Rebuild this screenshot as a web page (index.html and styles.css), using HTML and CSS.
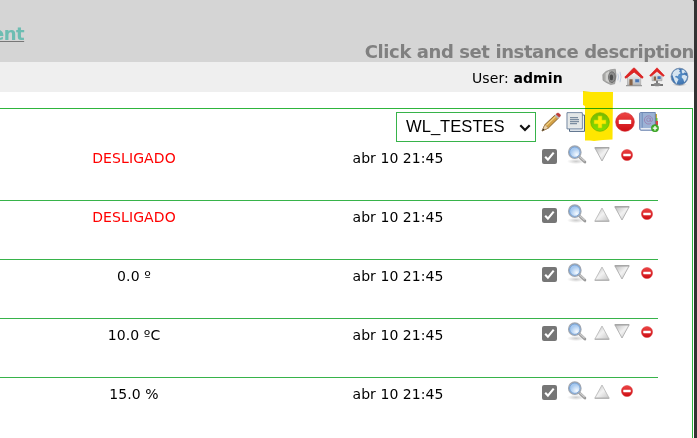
FILE: index.html
```
<!DOCTYPE html>
<html lang="pt">
<head>
<meta charset="utf-8">
<title>Instances</title>
<link rel="stylesheet" href="styles.css">
</head>
<body>
<svg class="sprite" aria-hidden="true">
  <defs>
    <linearGradient id="red" x2="0" y2="1"><stop stop-color="#ed4545"/><stop offset="1" stop-color="#cd0d13"/></linearGradient>
    <linearGradient id="green" x2="0" y2="1"><stop stop-color="#78b900"/><stop offset="1" stop-color="#83e000"/></linearGradient>
    <linearGradient id="tri" x2="1" y2="1"><stop stop-color="#bbb"/><stop offset=".5" stop-color="#f2f2f2"/><stop offset="1" stop-color="#c5c5c5"/></linearGradient>
    <linearGradient id="wall" x2="0" y2="1"><stop stop-color="#fff"/><stop offset="1" stop-color="#bbb"/></linearGradient>
    <radialGradient id="globe-fill"><stop stop-color="#5892cc"/><stop offset="1" stop-color="#3e71ad"/></radialGradient>
    <radialGradient id="lens" cx=".65" cy=".7"><stop stop-color="#f5faff"/><stop offset="1" stop-color="#a7c9ef"/></radialGradient>
    <radialGradient id="shade"><stop stop-color="#aaa"/><stop offset="1" stop-color="#aaa" stop-opacity="0"/></radialGradient>
  </defs>
  <symbol id="minus" viewBox="0 0 20 20"><circle cx="10" cy="10" r="9.3" fill="url(#red)" stroke="#d52a2e" stroke-width=".7"/><rect x="3.8" y="7.8" width="12.4" height="4.2" rx=".6" fill="#fff"/></symbol>
  <symbol id="plus" viewBox="0 0 20 20"><circle cx="10" cy="10" r="9.3" fill="url(#green)" stroke="#74ad00" stroke-width=".7"/><path d="M8 4h4v4h4v4h-4v4H8v-4H4V8h4z" fill="#ffea00" stroke="#b5d400" stroke-width=".6"/></symbol>
  <symbol id="pencil" viewBox="0 0 20 20"><path d="M1 19 4 12.5 14 3l3.4 3.2L7.4 16z" fill="#d2a045" stroke="#755222" stroke-width=".8"/><path d="M5 13.6 14.8 4.4" stroke="#f4d588" stroke-width="1.1"/><path d="M1 19 4 12.5 7.4 16z" fill="#ead2ab" stroke="#9a713b" stroke-width=".5"/><path d="m1 19 1.2-2.6 1.4 1.3z" fill="#333"/><path d="m13.4 3.6 1.5-1.4 3.4 3.1-1.5 1.5z" fill="#b7b7b7"/><path d="m14.9 2.2 1.3-1q1.3-.4 2.5.8t.8 2.1l-1.3 1.2z" fill="#c43a35" stroke="#933" stroke-width=".4"/></symbol>
  <symbol id="pages" viewBox="0 0 20 20"><path d="M3.5 3h15v16.4h-15z" fill="#eef2f5" stroke="#536984"/><path d="M1 .7h15.3v16.2H1z" fill="#f2f3f2" stroke="#6c829c"/><path d="M2.2 1.9h12.9v13.8H2.2z" fill="#e3e7e7"/><path d="M4 5.6h8M4 7.6h9M4 9.6h9M4 11.6h7" stroke="#7b8da0" stroke-width="1.1"/></symbol>
  <symbol id="book" viewBox="0 0 20 20"><path d="M16 2h2v4h-2z" fill="#c6a839"/><path d="M16 6h2.5v3H16z" fill="#6ab83d"/><path d="M16 9h3v4h-3z" fill="#d84242"/><path d="M1.5.5h14.8v17.8H2q-1.4-.2-1.4-1.6V1.6Q.6.7 1.5.5z" fill="#9cb2d5" stroke="#5874a3" stroke-width=".8"/><path d="M3.2 1v14.7" stroke="#6f8dbc"/><path d="M1.7 16h14v1.6h-14z" fill="#e8ecf2"/><circle cx="9.5" cy="7.7" r="1.8" fill="none" stroke="#9b86b5"/><path d="M11.4 5.8v3.4q1.8 1.2 2.2-1.5A4.1 4.1 0 1 0 12 11.2" fill="none" stroke="#9b86b5"/><circle cx="16" cy="16.2" r="3.7" fill="#43ae28" stroke="#278c1b" stroke-width=".4"/><path d="M16 14v4.4m-2.2-2.2h4.4" stroke="#fff" stroke-width="1.3"/></symbol>
  <symbol id="lens-icon" viewBox="0 0 20 20"><ellipse cx="9" cy="16.4" rx="9" ry="2.7" fill="url(#shade)" opacity=".6"/><path d="m12.2 11.7 5.7 5.3" stroke="#999" stroke-width="2.8" stroke-linecap="round"/><path d="m12.7 11.7 5 4.6" stroke="#ccc" stroke-width="1.2"/><circle cx="7.8" cy="7.2" r="6.2" fill="url(#lens)" stroke="#a3a8b0" stroke-width="1.3"/><circle cx="7.8" cy="7.2" r="5.2" fill="none" stroke="#6998d1" stroke-width=".8"/></symbol>
  <symbol id="up" viewBox="0 0 16 15"><path d="M8 1 15.2 14.2H.8z" fill="url(#tri)" stroke="#b5b5b5" stroke-width=".8"/><path d="M.8 14.2h14.4" stroke="#aaa"/></symbol>
  <symbol id="down" viewBox="0 0 16 15"><path d="M8 14 .8.8h14.4z" fill="url(#tri)" stroke="#a5a5a5" stroke-width=".8"/><path d="M.8.8h14.4" stroke="#999"/></symbol>
  <symbol id="check" viewBox="0 0 15 15"><rect width="15" height="15" rx="2" fill="#767676"/><path d="m3.2 7.8 2.7 2.8 5.8-7" fill="none" stroke="#fff" stroke-width="2.1"/></symbol>
  <symbol id="speaker" viewBox="0 0 20 18"><path d="M.8 6.5 4 3.4 8.5 1.8l4.8-.6q2 7-.7 14.6l-4 .8-4.4-2.2L1 12.3z" fill="#aaaaa8" stroke="#858585" stroke-width=".6"/><path d="M3.6 5.5 7 3v11.5l-3.4-2z" fill="#d0d0ce"/><ellipse cx="9.9" cy="9.2" rx="3.4" ry="5.4" fill="#8c8c8c" stroke="#666" stroke-width=".8"/><ellipse cx="9.4" cy="9.4" rx="1.7" ry="2.9" fill="#4c4c4c"/><path d="M15.8 5.6q1.3 3.4 0 6.8M18 3.8q2 5.2 0 10.4" fill="none" stroke="#bccade" stroke-width=".9"/></symbol>
  <symbol id="house" viewBox="0 0 20 20"><path d="M3.5 9.5 10 3l6.7 6.5V18H3.5z" fill="url(#wall)" stroke="#999" stroke-width=".5"/><path d="M2 18h16v1.2H2z" fill="#999"/><path d="M5.4 12.2h3.2v6H5.4z" fill="#886448"/><path d="M11 12h4.4v3.6H11z" fill="#4975b3" stroke="#bccce1" stroke-width=".5"/><path d="M.8 10.2 9.4 1.2q.6-.6 1.2 0l8.6 9q-.9 1.7-2.2.3L10.1 5 3 10.5q-1.4 1.4-2.2-.3z" fill="#e02424" stroke="#d52525" stroke-width=".9"/></symbol>
  <symbol id="house-net" viewBox="0 0 16 20"><path d="M7 13h2v4H7zM2 17h12v2H2z" fill="#777"/><ellipse cx="8" cy="17.5" rx="3.5" ry="1.8" fill="#888"/><path d="M3 7.4 8 2.6l5 4.8v6.3H3z" fill="url(#wall)" stroke="#999" stroke-width=".5"/><path d="M4.8 9.4h2.2v4H4.8z" fill="#886448"/><path d="M8.5 9.2h3.2V12H8.5z" fill="#4975b3"/><path d="M.7 8.5 8 .8l7.3 7.7q-.9 1.2-1.9.3L8 4.4 2.6 8.8q-1 .9-1.9-.3z" fill="#df2525" stroke="#df2525" stroke-width=".7"/></symbol>
  <symbol id="globe" viewBox="0 0 20 20"><ellipse cx="10" cy="18" rx="8" ry="1.8" fill="url(#shade)"/><circle cx="10" cy="9.6" r="8.9" fill="url(#globe-fill)" stroke="#7089a8" stroke-width=".8"/><path d="M2.3 7.3Q4 2.5 8.5 1.6l2 1.2-.9 1.7 1.8 1.2-2.4 1.6-.6 2-2-.5-1.3 1.1 2.2 1 1.7 1.6-1.2 2.3-.8 2.6-2-3-1.2-3.1zM12.2 2l2.6 1 2.2 2.7-1.9-.4-1.4 1.3-1.2-1.4zM12.4 8.5l2.8-1 2.9 1.8-.8 3.2-2.3 2.9-1.1-3.2-1.5-1.4z" fill="#d5e4f0"/></symbol>
</svg>

<div class="page">
  <header class="banner">
    <a class="brand">ent</a>
    <div class="description">Click and set instance description</div>
  </header>
  <nav class="userbar">
    <span class="user">User: <b>admin</b></span>
    <svg class="i-speaker"><use href="#speaker"/></svg>
    <svg class="i-house"><use href="#house"/></svg>
    <svg class="i-net"><use href="#house-net"/></svg>
    <svg class="i-globe"><use href="#globe"/></svg>
  </nav>
  <main class="panel">
    <div class="toolbar">
      <div class="select"><span>WL_TESTES</span><svg class="chevron" viewBox="0 0 12 8"><path d="m1.3 1.3 4.7 4.7 4.7-4.7" fill="none" stroke="#111" stroke-width="2.2"/></svg></div>
      <svg class="tool"><use href="#pencil"/></svg>
      <svg class="tool"><use href="#pages"/></svg>
      <span class="marked"><svg class="marker" viewBox="0 0 30 50"><path d="M0 0 8 1 30 1 29.5 48.5 20 49 11 50 7 49.5 2 49.5V15L0 14z" fill="#ffe600"/></svg><svg class="tool"><use href="#plus"/></svg></span>
      <svg class="tool"><use href="#minus"/></svg>
      <svg class="tool"><use href="#book"/></svg>
    </div>
    <div class="rows">
      <div class="row"><span class="value off">DESLIGADO</span><span class="date">abr 10 21:45</span><span class="actions"><svg class="check"><use href="#check"/></svg><svg class="lens"><use href="#lens-icon"/></svg><svg class="down"><use href="#down"/></svg><svg class="remove"><use href="#minus"/></svg></span></div>
      <div class="row"><span class="value off">DESLIGADO</span><span class="date">abr 10 21:45</span><span class="actions"><svg class="check"><use href="#check"/></svg><svg class="lens"><use href="#lens-icon"/></svg><svg class="up"><use href="#up"/></svg><svg class="down"><use href="#down"/></svg><svg class="remove"><use href="#minus"/></svg></span></div>
      <div class="row"><span class="value">0.0 º</span><span class="date">abr 10 21:45</span><span class="actions"><svg class="check"><use href="#check"/></svg><svg class="lens"><use href="#lens-icon"/></svg><svg class="up"><use href="#up"/></svg><svg class="down"><use href="#down"/></svg><svg class="remove"><use href="#minus"/></svg></span></div>
      <div class="row"><span class="value">10.0 ºC</span><span class="date">abr 10 21:45</span><span class="actions"><svg class="check"><use href="#check"/></svg><svg class="lens"><use href="#lens-icon"/></svg><svg class="up"><use href="#up"/></svg><svg class="down"><use href="#down"/></svg><svg class="remove"><use href="#minus"/></svg></span></div>
      <div class="row"><span class="value">15.0 %</span><span class="date">abr 10 21:45</span><span class="actions"><svg class="check"><use href="#check"/></svg><svg class="lens"><use href="#lens-icon"/></svg><svg class="up"><use href="#up"/></svg><svg class="remove"><use href="#minus"/></svg></span></div>
    </div>
  </main>
</div>
</body>
</html>
```
FILE: styles.css
```
* { box-sizing: border-box; }
body {
  margin: 0;
  height: 438px;
  overflow: hidden;
  background: #333;
  font-family: Verdana, "DejaVu Sans", sans-serif;
  font-size: 14px;
  color: #000;
}
svg { display: block; flex: none; }
.sprite { position: absolute; width: 0; height: 0; }
.page { width: 694px; height: 438px; background: #fff; border-top-right-radius: 3px; overflow: hidden; }
.banner {
  display: flex;
  justify-content: space-between;
  height: 62px;
  background: #d5d5d5;
  font-weight: bold;
}
.brand {
  height: 43px;
  padding-top: 23px;
  margin-left: -8px;
  font-size: 18px;
  line-height: 21px;
  letter-spacing: -.5px;
  color: #6dbdb2;
  text-decoration: underline;
  text-decoration-color: #777;
  text-decoration-thickness: 1px;
  text-underline-offset: 1px;
}
.description { padding-top: 41px; font-size: 18px; line-height: 22px; letter-spacing: -.41px; color: #808080; white-space: nowrap; }
.userbar { display: flex; height: 30px; padding-left: 472px; background: #efefef; }
.user { width: 130px; line-height: 32px; letter-spacing: .1px; white-space: nowrap; }
.i-speaker { width: 20px; height: 18px; margin-top: 6px; }
.i-house { width: 20px; height: 20px; margin: 5px 0 0 2px; }
.i-net { width: 16px; height: 20px; margin: 5px 0 0 5px; }
.i-globe { width: 19px; height: 20px; margin: 5px 0 0 5px; }
.panel { margin-top: 16px; width: 693px; height: 340px; border: solid #2eb53c; border-width: 1px 1px 0 0; }
.toolbar { display: flex; height: 32px; padding: 3px 0 0 396px; }
.select {
  display: flex;
  align-items: center;
  width: 140px;
  height: 30px;
  padding-left: 9px;
  margin-right: 5px;
  border: 1px solid #37b34a;
  font: 16.6px "Liberation Sans", Arial, sans-serif;
}
.select span { width: 113px; }
.chevron { width: 12px; height: 8px; margin-top: 1px; }
.tool { position: relative; width: 20px; height: 20px; margin-right: 4.6px; }
.marked { position: relative; }
.marker { position: absolute; left: -7px; top: -21px; width: 30px; height: 50px; mix-blend-mode: multiply; }
.rows { width: 658px; }
.row { display: flex; height: 59px; line-height: 18px; }
.row + .row { border-top: 1px solid #37b34a; }
.row + .row > * { margin-top: -1px; }
.row > span { padding-top: 8px; }
.value { width: 268px; text-align: center; letter-spacing: .1px; }
.off { color: #f00; }
.date { width: 260px; text-align: center; letter-spacing: .05px; }
.actions { display: flex; width: 130px; padding-left: 14px; }
.check { width: 15px; height: 15px; }
.lens { width: 20px; height: 20px; margin: -4px 7px 0 10px; }
.up, .down { width: 16px; height: 15px; margin: -1px 4px 0 0; }
.down { margin-top: -2px; }
.remove { width: 12px; height: 12px; margin: 0 0 0 7px; }
```
